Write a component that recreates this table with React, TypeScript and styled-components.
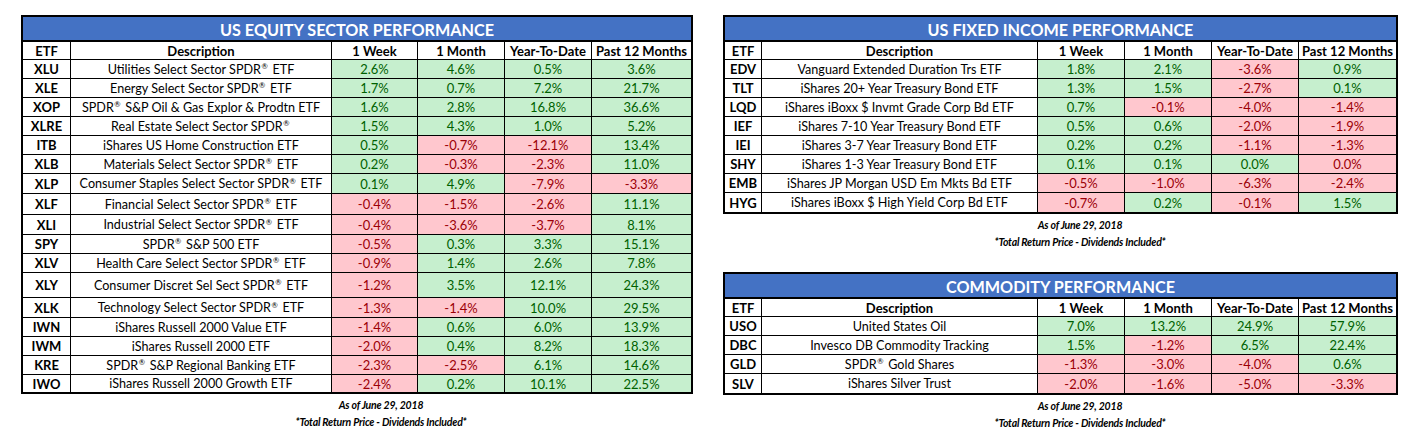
import React from "react";
import styled, { createGlobalStyle } from "styled-components";

const Global = createGlobalStyle`
  *, *::before, *::after { box-sizing: border-box; }
  html, body { margin: 0; padding: 0; background: #ffffff; }
  body { font-family: Lato, "Open Sans", "Liberation Sans", sans-serif; color: #000; }
`;

type Cell = { v: string; down: boolean };
type RowData = { etf: string; desc: string; cells: Cell[]; h?: number };

const c = (v: string, down?: boolean): Cell => ({ v, down: down ?? v.startsWith("-") });
const r = (etf: string, desc: string, vals: (string | Cell)[], h?: number): RowData => ({
  etf,
  desc,
  cells: vals.map((x) => (typeof x === "string" ? c(x) : x)),
  h,
});

const equity: RowData[] = [
  r("XLU", "Utilities Select Sector SPDR® ETF", ["2.6", "4.6", "0.5", "3.6"]),
  r("XLE", "Energy Select Sector SPDR® ETF", ["1.7", "0.7", "7.2", "21.7"]),
  r("XOP", "SPDR® S&P Oil & Gas Explor & Prodtn ETF", ["1.6", "2.8", "16.8", "36.6"]),
  r("XLRE", "Real Estate Select Sector SPDR®", ["1.5", "4.3", "1.0", "5.2"]),
  r("ITB", "iShares US Home Construction ETF", ["0.5", "-0.7", "-12.1", "13.4"]),
  r("XLB", "Materials Select Sector SPDR® ETF", ["0.2", "-0.3", "-2.3", "11.0"]),
  r("XLP", "Consumer Staples Select Sector SPDR® ETF", ["0.1", "4.9", "-7.9", "-3.3"], 20),
  r("XLF", "Financial Select Sector SPDR® ETF", ["-0.4", "-1.5", "-2.6", "11.1"], 21),
  r("XLI", "Industrial Select Sector SPDR® ETF", ["-0.4", "-3.6", "-3.7", "8.1"], 20),
  r("SPY", "SPDR® S&P 500 ETF", ["-0.5", "0.3", "3.3", "15.1"]),
  r("XLV", "Health Care Select Sector SPDR® ETF", ["-0.9", "1.4", "2.6", "7.8"]),
  r("XLY", "Consumer Discret Sel Sect SPDR® ETF", ["-1.2", "3.5", "12.1", "24.3"], 25),
  r("XLK", "Technology Select Sector SPDR® ETF", ["-1.3", "-1.4", "10.0", "29.5"], 20),
  r("IWN", "iShares Russell 2000 Value ETF", ["-1.4", "0.6", "6.0", "13.9"]),
  r("IWM", "iShares Russell 2000 ETF", ["-2.0", "0.4", "8.2", "18.3"]),
  r("KRE", "SPDR® S&P Regional Banking ETF", ["-2.3", "-2.5", "6.1", "14.6"]),
  r("IWO", "iShares Russell 2000 Growth ETF", ["-2.4", "0.2", "10.1", "22.5"], 17),
];

const fixedIncome: RowData[] = [
  r("EDV", "Vanguard Extended Duration Trs ETF", ["1.8", "2.1", "-3.6", "0.9"]),
  r("TLT", "iShares 20+ Year Treasury Bond ETF", ["1.3", "1.5", "-2.7", "0.1"]),
  r("LQD", "iShares iBoxx $ Invmt Grade Corp Bd ETF", ["0.7", "-0.1", "-4.0", "-1.4"]),
  r("IEF", "iShares 7-10 Year Treasury Bond ETF", ["0.5", "0.6", "-2.0", "-1.9"]),
  r("IEI", "iShares 3-7 Year Treasury Bond ETF", ["0.2", "0.2", "-1.1", "-1.3"]),
  r("SHY", "iShares 1-3 Year Treasury Bond ETF", ["0.1", "0.1", "0.0", c("0.0", true)]),
  r("EMB", "iShares JP Morgan USD Em Mkts Bd ETF", ["-0.5", "-1.0", "-6.3", "-2.4"]),
  r("HYG", "iShares iBoxx $ High Yield Corp Bd ETF", ["-0.7", "0.2", "-0.1", "1.5"]),
];

const commodity: RowData[] = [
  r("USO", "United States Oil", ["7.0", "13.2", "24.9", "57.9"]),
  r("DBC", "Invesco DB Commodity Tracking", ["1.5", "-1.2", "6.5", "22.4"]),
  r("GLD", "SPDR® Gold Shares", ["-1.3", "-3.0", "-4.0", "0.6"]),
  r("SLV", "iShares Silver Trust", ["-2.0", "-1.6", "-5.0", "-3.3"]),
];

const headers = ["ETF", "Description", "1 Week", "1 Month", "Year-To-Date", "Past 12 Months"];

const LEFT_COLS = "48px 261px 86px 87px 87px 99px";
const RIGHT_COLS = "37px 276px 87px 87px 87px 97px";

const Page = styled.div`
  display: flex;
  align-items: flex-start;
  gap: 30px;
  padding: 15px 0 0 21px;
`;

const Column = styled.div<{ $w: number; $gap?: number }>`
  width: ${(p) => p.$w}px;
  display: flex;
  flex-direction: column;
  gap: ${(p) => p.$gap ?? 0}px;
`;

const Section = styled.section`
  display: flex;
  flex-direction: column;
`;

const Table = styled.div`
  border: 2px solid #000;
  width: 100%;
`;

const Title = styled.div`
  height: 25px;
  background: #4472c4;
  border-bottom: 2px solid #000;
  color: #ffffff;
  font-weight: 700;
  font-size: 16.2px;
  display: flex;
  align-items: center;
  justify-content: center;
  padding-top: 1px;
`;

const Row = styled.div<{ $cols: string; $h: number; $head?: boolean }>`
  display: grid;
  grid-template-columns: ${(p) => p.$cols};
  height: ${(p) => p.$h}px;
  border-bottom: 1px solid #000;
  font-weight: ${(p) => (p.$head ? 700 : 400)};
  &:last-child {
    border-bottom: none;
  }
`;

const CellBox = styled.div<{ $tone?: "up" | "down"; $bold?: boolean; $size?: number }>`
  display: flex;
  align-items: center;
  justify-content: center;
  border-right: 1px solid #000;
  font-size: ${(p) => p.$size ?? 13}px;
  white-space: pre;
  overflow: visible;
  font-weight: ${(p) => (p.$bold ? 700 : "inherit")};
  background: ${(p) => (p.$tone === "up" ? "#c6efce" : p.$tone === "down" ? "#ffc7ce" : "#ffffff")};
  color: ${(p) => (p.$tone === "up" ? "#006100" : p.$tone === "down" ? "#9c0006" : "#000000")};
  &:last-child {
    border-right: none;
  }
`;

const Reg = styled.span`
  font-size: 0.6em;
  line-height: 0;
  position: relative;
  top: -0.55em;
  margin: 0 1.5px 0 0.5px;
`;

const Notes = styled.div<{ $center: number }>`
  width: 240px;
  margin-left: ${(p) => p.$center - 120}px;
  margin-top: 3px;
  display: flex;
  flex-direction: column;
  align-items: center;
  font-size: 10.5px;
  font-weight: 700;
  font-style: italic;
  line-height: 17px;
  letter-spacing: -0.2px;
`;

function Desc({ text }: { text: string }) {
  const parts = text.split("®");
  return (
    <span>
      {parts.map((p, i) => (
        <React.Fragment key={i}>
          {p}
          {i < parts.length - 1 && <Reg>®</Reg>}
        </React.Fragment>
      ))}
    </span>
  );
}

function PerfTable({ title, rows, cols }: { title: string; rows: RowData[]; cols: string }) {
  return (
    <Table>
      <Title>{title}</Title>
      <Row $cols={cols} $h={18} $head>
        {headers.map((h) => (
          <CellBox key={h}>{h}</CellBox>
        ))}
      </Row>
      {rows.map((row) => (
        <Row key={row.etf} $cols={cols} $h={row.h ?? 19}>
          <CellBox $bold>{row.etf}</CellBox>
          <CellBox $size={12.6}>
            <Desc text={row.desc} />
          </CellBox>
          {row.cells.map((cell, i) => (
            <CellBox key={i} $tone={cell.down ? "down" : "up"}>
              {cell.v}%
            </CellBox>
          ))}
        </Row>
      ))}
    </Table>
  );
}

function Footnote({ center }: { center: number }) {
  return (
    <Notes $center={center}>
      <span>As of June 29, 2018</span>
      <span>*Total Return Price - Dividends Included*</span>
    </Notes>
  );
}

export default function App() {
  return (
    <>
      <Global />
      <Page>
        <Column $w={672}>
          <Section>
            <PerfTable title="US EQUITY SECTOR PERFORMANCE" rows={equity} cols={LEFT_COLS} />
            <Footnote center={360} />
          </Section>
        </Column>
        <Column $w={675} $gap={21}>
          <Section>
            <PerfTable title="US FIXED INCOME PERFORMANCE" rows={fixedIncome} cols={RIGHT_COLS} />
            <Footnote center={357} />
          </Section>
          <Section>
            <PerfTable title="COMMODITY PERFORMANCE" rows={commodity} cols={RIGHT_COLS} />
            <Footnote center={357} />
          </Section>
        </Column>
      </Page>
    </>
  );
}
